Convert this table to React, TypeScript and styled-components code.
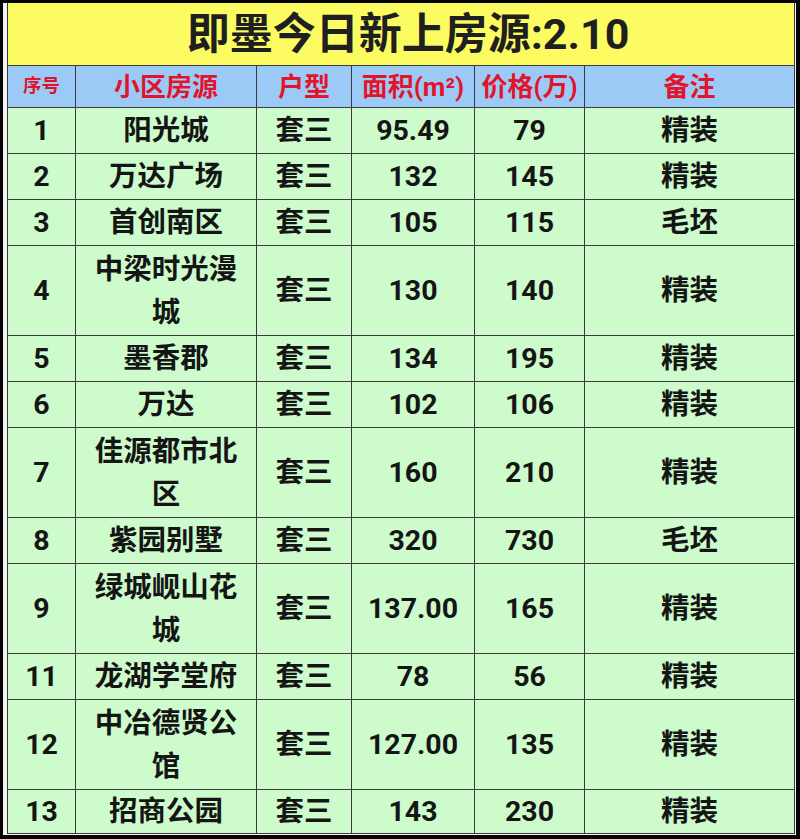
import * as React from "react";
import styled, { createGlobalStyle } from "styled-components";

interface IListing {
  no: string;
  name: string[];
  type: string;
  area: string;
  price: string;
  note: string;
}

const listings: IListing[] = [
  { no: "1", name: ["阳光城"], type: "套三", area: "95.49", price: "79", note: "精装" },
  { no: "2", name: ["万达广场"], type: "套三", area: "132", price: "145", note: "精装" },
  { no: "3", name: ["首创南区"], type: "套三", area: "105", price: "115", note: "毛坯" },
  { no: "4", name: ["中梁时光漫", "城"], type: "套三", area: "130", price: "140", note: "精装" },
  { no: "5", name: ["墨香郡"], type: "套三", area: "134", price: "195", note: "精装" },
  { no: "6", name: ["万达"], type: "套三", area: "102", price: "106", note: "精装" },
  { no: "7", name: ["佳源都市北", "区"], type: "套三", area: "160", price: "210", note: "精装" },
  { no: "8", name: ["紫园别墅"], type: "套三", area: "320", price: "730", note: "毛坯" },
  { no: "9", name: ["绿城岘山花", "城"], type: "套三", area: "137.00", price: "165", note: "精装" },
  { no: "11", name: ["龙湖学堂府"], type: "套三", area: "78", price: "56", note: "精装" },
  { no: "12", name: ["中冶德贤公", "馆"], type: "套三", area: "127.00", price: "135", note: "精装" },
  { no: "13", name: ["招商公园"], type: "套三", area: "143", price: "230", note: "精装" },
];

const columns = [68, 181, 95, 123, 110, 210];

const GlobalStyle = createGlobalStyle`
  html, body {
    margin: 0;
    padding: 0;
    background: #050505;
  }
  body {
    font-family: Roboto, "Noto Sans CJK SC", "Noto Sans", sans-serif;
  }
`;

const Frame = styled.div`
  width: 800px;
  height: 839px;
  box-sizing: border-box;
  padding: 3px 4px 4px 3px;
  background: #050505;
`;

const Sheet = styled.div`
  height: 100%;
  box-sizing: border-box;
  padding: 0 1px 1px 4px;
  background: #f4f4f4;
`;

const Table = styled.table`
  width: 788px;
  table-layout: fixed;
  border-collapse: collapse;
  border: 1.5px solid #3a3a3a;
  border-top: none;
`;

const TitleCell = styled.td`
  height: 62px;
  padding: 0 0 0 14px;
  background: #fcfc62;
  color: #1f1f1f;
  font-size: 43px;
  font-weight: 700;
  text-align: center;
  vertical-align: middle;
  border: 1.5px solid #3a3a3a;
  border-top: none;
  line-height: 1;
`;

const HeadCell = styled.th<{ $small?: boolean }>`
  height: 41px;
  padding: 0;
  background: #9ccaf6;
  color: #e2142c;
  font-size: ${(p) => (p.$small ? "18.5px" : "26px")};
  font-weight: 700;
  text-align: center;
  vertical-align: middle;
  border: 1.5px solid #3a3a3a;
  line-height: 1;
  white-space: nowrap;
`;

const Row = styled.tr<{ $tall?: boolean; $last?: boolean }>`
  height: ${(p) => (p.$tall ? "90px" : p.$last ? "44px" : "46px")};
`;

const Cell = styled.td`
  padding: 0;
  background: #cdfbcb;
  color: #151515;
  font-size: 28.5px;
  font-weight: 700;
  text-align: center;
  vertical-align: middle;
  border: 1.5px solid #3a3a3a;
  line-height: 43px;
  white-space: nowrap;
`;

const Line = styled.div`
  line-height: 43px;
`;

export default function App() {
  return (
    <Frame>
      <GlobalStyle />
      <Sheet>
        <Table>
          <colgroup>
            {columns.map((w, i) => (
              <col key={i} style={{ width: w }} />
            ))}
          </colgroup>
          <tbody>
            <tr>
              <TitleCell colSpan={6}>即墨今日新上房源:2.10</TitleCell>
            </tr>
            <tr>
              <HeadCell $small>序号</HeadCell>
              <HeadCell>小区房源</HeadCell>
              <HeadCell>户型</HeadCell>
              <HeadCell>面积(m²)</HeadCell>
              <HeadCell>价格(万)</HeadCell>
              <HeadCell>备注</HeadCell>
            </tr>
            {listings.map((item, index) => (
              <Row
                key={item.no}
                $tall={item.name.length > 1}
                $last={index === listings.length - 1}
              >
                <Cell>{item.no}</Cell>
                <Cell>
                  {item.name.map((part) => (
                    <Line key={part}>{part}</Line>
                  ))}
                </Cell>
                <Cell>{item.type}</Cell>
                <Cell>{item.area}</Cell>
                <Cell>{item.price}</Cell>
                <Cell>{item.note}</Cell>
              </Row>
            ))}
          </tbody>
        </Table>
      </Sheet>
    </Frame>
  );
}
